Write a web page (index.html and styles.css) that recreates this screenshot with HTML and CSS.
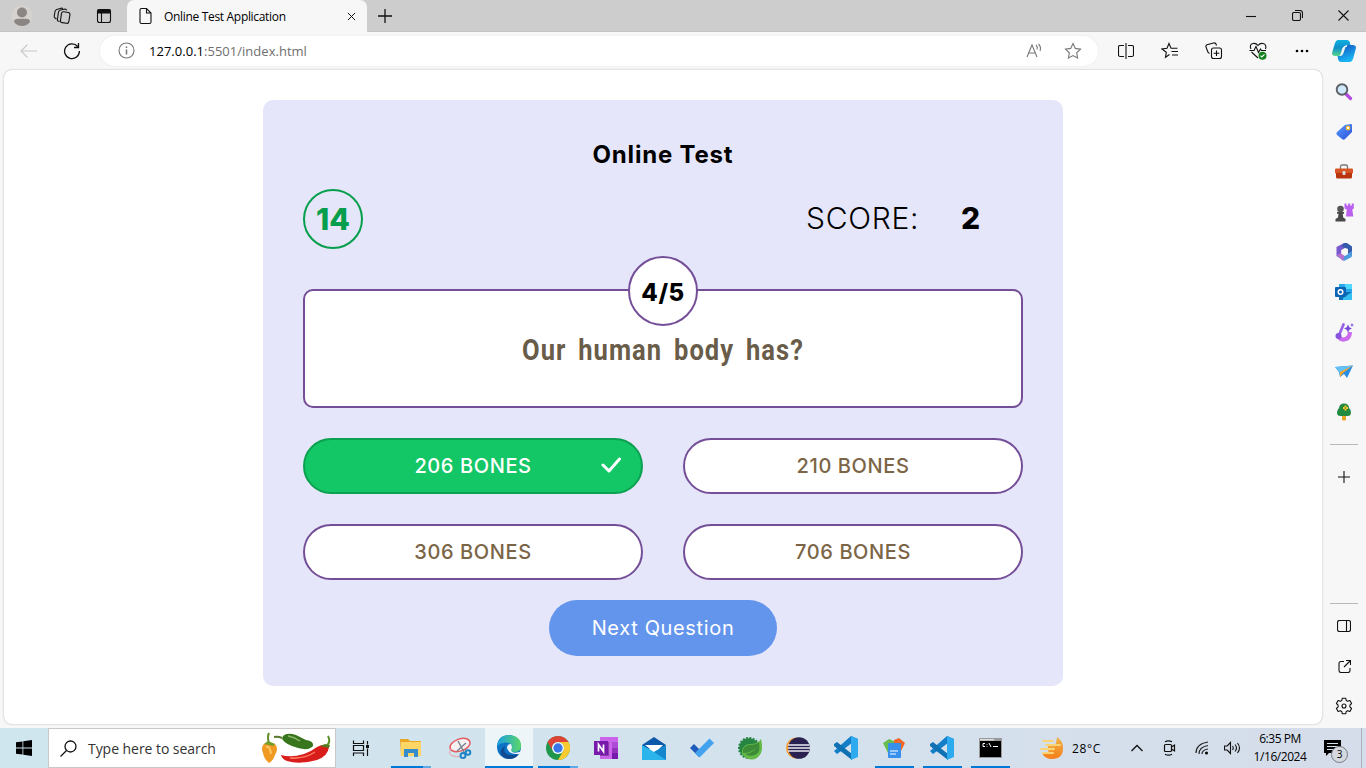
FILE: index.html
```html
<!DOCTYPE html>
<html lang="en">
<head>
<meta charset="utf-8">
<title>Online Test Application</title>
<link rel="stylesheet" href="styles.css">
</head>
<body>
<div class="screen">
  <header class="titlebar">
    <span class="slot w44"><svg width="22" height="22" viewBox="0 0 22 22"><circle cx="11" cy="11" r="10.5" fill="#d6d3cf"/><circle cx="11" cy="7.500" r="5" fill="#8b8683"/><path d="M3 17q0-3.300 4-3.300h8q4 0 4 3.300-3 4-8 4T3 17z" fill="#8b8683"/></svg></span>
    <span class="slot w36"><svg width="18" height="18" viewBox="0 0 18 18" class="line"><rect x="8" y="5" width="8.500" height="11" rx="2" transform="rotate(9 12 10)"/><path d="M6.500 14.500 5 14q-.8-.5-.6-1.500L5.500 5q.3-1.500 2-2l4.500-1q1.300 0 1.700 1.300M3.500 12 2 11q-1-.6-.8-1.700L2 4.500Q2.300 3 3.800 2.500L8 1.200q1.400-.3 1.800.5"/></svg></span>
    <span class="slot w48"><svg width="16" height="16" viewBox="0 0 16 16" class="line"><rect x="1.500" y="1.500" width="13" height="13" rx="2"/><path d="M2 2h12v3H2z" fill="#111"/><path d="M5.500 5v9"/></svg></span>
    <div class="tab">
      <svg width="14" height="18" viewBox="0 0 14 18" class="line"><path d="M2.500 1.500h5l4.500 4.500v9q0 1.500-1.500 1.500h-8Q1 16.500 1 15V3q0-1.500 1.500-1.500zM7.500 1.500V6H12"/></svg>
      <span class="tab-title">Online Test Application</span>
      <svg width="9" height="9" viewBox="0 0 10 10" class="line"><path d="m1 1 8 8M9 1 1 9"/></svg>
    </div>
    <span class="slot w34"><svg width="14" height="14" viewBox="0 0 14 14" class="line"><path d="M7 0v14M0 7h14" stroke-width="1.300"/></svg></span>
    <div class="window-buttons">
      <span class="slot"><svg width="10" height="10" viewBox="0 0 10 10" class="line"><path d="M0 5.500h10"/></svg></span>
      <span class="slot"><svg width="11" height="11" viewBox="0 0 11 11" class="line"><rect x=".5" y="2.500" width="8" height="8" rx="1.500"/><path d="M3 .5h5q2.500 0 2.500 2.500v5"/></svg></span>
      <span class="slot"><svg width="11" height="11" viewBox="0 0 11 11" class="line"><path d="m.5.5 10 10M10.500.5l-10 10"/></svg></span>
    </div>
  </header>

  <nav class="toolbar">
    <span class="slot"><svg width="17" height="14" viewBox="0 0 17 14" class="line faint"><path d="M17 7H1M7.500.5 1 7l6.500 6.500"/></svg></span>
    <span class="slot"><svg width="18" height="18" viewBox="0 0 18 18" class="line"><path d="M14.700 4.500A7.400 7.400 0 1 0 16.400 9M15.500 1v4.500H11" stroke-width="1.300"/></svg></span>
    <div class="address">
      <svg width="17" height="17" viewBox="0 0 17 17" class="line gray"><circle cx="8.500" cy="8.500" r="7.500"/><path d="M8.500 7.500v5M8.500 4.500V6" stroke-width="1.500"/></svg>
      <span class="url">127.0.0.1<span class="url-path">:5501/index.html</span></span>
      <svg class="read" width="17" height="16" viewBox="0 0 17 16"><path d="m1 14 5-12 5 12M3 10h6M10 2q2 2 1 4.500M12.500 1q3 3 1.500 7" fill="none" stroke="#777" stroke-width="1.100"/></svg>
      <svg width="18" height="18" viewBox="0 0 18 18" class="line gray"><path d="m9 1.500 2.300 4.900 5.200.7-3.800 3.700.9 5.300L9 13.600l-4.600 2.500.9-5.300L1.500 7.100l5.200-.7z"/></svg>
    </div>
    <div class="tools">
      <span class="slot"><svg width="16" height="16" viewBox="0 0 16 16" class="line"><path d="M6 2.500H2Q.5 2.500.5 4v8q0 1.500 1.500 1.500h4M10 2.500h4q1.500 0 1.500 1.500v8q0 1.500-1.500 1.500h-4M8 0v16"/></svg></span>
      <span class="slot"><svg width="18" height="18" viewBox="0 0 18 18" class="line"><path d="m8.500 12.500-4 2.800.8-5L1 7l5-.7 2-4.800 2 4.700h6.500M10.500 9.500H17M11 13h6"/></svg></span>
      <span class="slot"><svg width="18" height="18" viewBox="0 0 18 18" class="line"><rect x="6.500" y="6" width="10" height="10.500" rx="2"/><path d="M11.500 8.500v5.500M8.700 11.200h5.600M4.500 11.500Q3 11 2.500 9L1 5q-.4-1.600 1-2.200L8.500 1q2-.5 2.500 1l.5 1.500"/></svg></span>
      <span class="slot"><svg width="18" height="18" viewBox="0 0 18 18" class="line"><path d="M2 7Q0 2.500 4 1.500q3-.6 5 2 2-2.600 5-2 4 1 2.500 5.500M2.500 10 9 16M.5 8.500H5l2-4 2.500 6L11.500 7l1 1.500H17"/><circle cx="13.500" cy="13.700" r="4" fill="#11801d" stroke="none"/><path d="m11.500 13.700 1.300 1.300 2.700-2.700" stroke="#fff"/></svg></span>
      <span class="slot"><svg width="14" height="4" viewBox="0 0 14 4"><circle cx="2" cy="2" r="1.300"/><circle cx="7" cy="2" r="1.300"/><circle cx="12" cy="2" r="1.300"/></svg></span>
      <span class="slot copilot"><svg width="24" height="22" viewBox="0 0 24 22"><defs><linearGradient id="cp1" x2="0" y2="1"><stop stop-color="#0eb0e0"/><stop offset=".5" stop-color="#108fc9"/><stop offset="1" stop-color="#57d68b"/></linearGradient><linearGradient id="cp2" x2=".4" y2="1"><stop stop-color="#1551bd"/><stop offset="1" stop-color="#19b6f5"/></linearGradient></defs><path d="M6 0h9q2 0 2.700 2l.8 3h-3q-2 0-2.700 2l-2.500 7q-.8 2-3 2H3Q-.8 16 .3 12L3 3q1-3 3-3z" fill="url(#cp1)"/><path d="M18 22H9q-2 0-2.700-2l-.8-4h2.800q2 0 2.700-2l2.500-7q.7-2 3-2h4.200q4 0 3 4L21 19q-1 3-3 3z" fill="url(#cp2)"/><path d="M15 6q-2 0-2.700 2l-1.800 5q-.7 2-2.500 2.500 1-.8 1.500-2.500l1.500-5q.7-2 4-2z" fill="#f7f7f7" stroke="#f7f7f7"/></svg></span>
    </div>
  </nav>

  <div class="middle">
    <main class="page">
      <section class="card">
        <h1 class="title">Online Test</h1>
        <div class="status">
          <div class="timer"><span>14</span></div>
          <div class="score"><span class="score-label">SCORE:</span><b class="score-value">2</b></div>
        </div>
        <div class="question">
          <div class="counter"><span>4/5</span></div>
          <p class="question-text">Our human body has?</p>
        </div>
        <div class="options">
          <button class="option correct"><span>206 BONES</span><svg width="20" height="16" viewBox="0 0 20 16"><path d="m2 8 6 6L18.500 2" fill="none" stroke="#fff" stroke-width="3" stroke-linecap="round" stroke-linejoin="round"/></svg></button>
          <button class="option"><span>210 BONES</span></button>
          <button class="option"><span>306 BONES</span></button>
          <button class="option"><span>706 BONES</span></button>
        </div>
        <button class="next">Next Question</button>
      </section>
    </main>

    <aside class="sidebar">
      <span class="slot"><svg width="18" height="18" viewBox="0 0 18 18"><path d="m10.500 10.500 5 5" stroke="#b44be0" stroke-width="3.200" stroke-linecap="round"/><circle cx="7" cy="6.500" r="5.300" fill="#cfe9fa" stroke="#5c6065" stroke-width="1.900"/></svg></span>
      <span class="slot"><svg width="18" height="18" viewBox="0 0 18 18"><defs><linearGradient id="tag" x2="1" y2="1"><stop stop-color="#5c9cff"/><stop offset="1" stop-color="#2a50d8"/></linearGradient></defs><path d="M10 2l6-1q1 0 1 1v7l-7 7q-1.500 1.500-3 0L2 12Q.5 10.500 2 9z" fill="url(#tag)"/><circle cx="13" cy="5" r="1.800" fill="#fff" stroke="#f5bd28" stroke-width="1.200"/></svg></span>
      <span class="slot"><svg width="18" height="16" viewBox="0 0 18 16"><path d="M5.500 5V2.500Q5.500 1 7 1h4q1.500 0 1.500 1.500V5" fill="none" stroke="#777" stroke-width="1.300"/><rect y="4.500" width="18" height="5" rx="1" fill="#d75425"/><path d="M1 9h16v4q0 1.500-1.500 1.500h-13Q1 14.500 1 13z" fill="#b8350f"/><rect x="7.500" y="7" width="3" height="4" rx="1" fill="#ddd"/></svg></span>
      <span class="slot"><svg width="19" height="19" viewBox="0 0 19 19"><path d="M9.500.500h2v2h1.700v-2h2v2h1.600v-2h2v5l-1.500 1 1 7H11l.8-7-2.300-1z" fill="#bb60ef"/><circle cx="5.500" cy="6" r="3.300" fill="#555"/><path d="M2 9h7v1.700H7.700l.5 3.800 2.300 1.500v2.500H.5V16L3 14.500l.5-3.800H2z" fill="#494949"/></svg></span>
      <span class="slot"><svg width="18" height="18" viewBox="0 0 18 18"><path d="M9 0 1.500 4v9l5 3V7l6-3.500L9 0z" fill="#785bd0"/><path d="M9 0h3l5 3.500V13l-4-2.500V6L6.500 3.500z" fill="#355cab"/><path d="m17 8-.3 6L9 18 2 13l5-1.500 3 1.500 3-2z" fill="#4b9be0"/><path d="m1.500 12 5-2 3 3-1.500 5z" fill="#b76fce"/><path d="m9.500 5.500 3.200 1.800v3.500l-3.200 1.800-3.200-1.800V7.300z" fill="#f7f7f7"/></svg></span>
      <span class="slot"><svg width="18" height="18" viewBox="0 0 18 18"><path d="M4 1h13v8H4z" fill="#28a8ea"/><path d="M10 1h7v5h-7z" fill="#50d9ff"/><path d="M4 9h13v8H4z" fill="#0c6eb5"/><path d="m17 9-9 6v2h9z" fill="#36c0ef"/><rect y="4" width="11" height="10" rx="1" fill="#0a63b4"/><circle cx="5.500" cy="9" r="2.300" fill="none" stroke="#fff" stroke-width="1.500"/></svg></span>
      <span class="slot"><svg width="19" height="19" viewBox="0 0 19 19"><path d="M3 11q1 6 6 5.500 5.500-.5 6-7.500" fill="none" stroke="#cc6af0" stroke-width="4.200"/><path d="M8.500 1.500 4.500 11" stroke="#9a62e8" stroke-width="2.700" stroke-linecap="round"/><circle cx="3.500" cy="13" r="3" fill="#8854dd"/><path d="m13 1.500 1.300 2.700L17 5.500l-2.700 1.300L13 9.500l-1.300-2.700L9 5.500l2.700-1.300zM17 0l.6 1.400L19 2l-1.400.6L17 4l-.6-1.400L15 2l1.400-.6z" fill="#7848d7"/></svg></span>
      <span class="slot"><svg width="18" height="14" viewBox="0 0 18 14"><path d="M0 2 18 .5 12 13 9 9l-4 3-1-5z" fill="#288de4"/><path d="M0 2 18 .5 5 8z" fill="#63c0fb"/><path d="M5 12V7l13-6.500L8 8z" fill="#f6a623"/></svg></span>
      <span class="slot"><svg width="16" height="18" viewBox="0 0 16 18"><path d="M6 11h4v6q-2 1-4 0z" fill="#eaa52d"/><path d="M8 .5q5 0 5 4.500 2 1.500 2 4.500 0 3.500-3.500 3.500h-7Q1 13 1 9.500 1 7 3 5 3.500.5 8 .5z" fill="#238a42"/><path d="M9.500 2.500v5M7 5h5" stroke="#ffc426" stroke-width="2"/><circle cx="9.500" cy="5" r=".8" fill="#238a42"/></svg></span>
      <i class="rule"></i>
      <span class="slot add"><svg width="12" height="12" viewBox="0 0 12 12" class="line"><path d="M6 0v12M0 6h12"/></svg></span>
      <div class="side-bottom">
        <i class="rule"></i>
        <span class="slot"><svg width="14" height="12" viewBox="0 0 14 12" class="line"><rect x=".5" y=".5" width="13" height="11" rx="2"/><path d="M9.500.5v11"/></svg></span>
        <span class="slot"><svg width="13" height="13" viewBox="0 0 13 13" class="line"><path d="M6 1.500H3Q1 1.500 1 3.500v7q0 2 2 2h7q2 0 2-2V8M8 .5h4.500V5M12.500.5 6 7"/></svg></span>
        <span class="slot"><svg width="18" height="18" viewBox="0 0 18 18" class="line"><circle cx="9" cy="9" r="2"/><path d="M7.300 1.200h3.400l.5 2.300 1.500.8 2.200-.8 1.700 3-1.700 1.600v1.800l1.700 1.600-1.700 3-2.200-.8-1.500.8-.5 2.300H7.300l-.5-2.300-1.500-.8-2.200.8-1.700-3 1.700-1.600V8.100L1.400 6.500l1.700-3 2.200.8 1.500-.8z" stroke-linejoin="round"/></svg></span>
      </div>
    </aside>
  </div>

  <footer class="taskbar">
    <span class="slot"><svg width="16" height="16" viewBox="0 0 16 16"><path d="m0 2.300 6.500-.9v6.200H0zM7.300 1.300 16 0v7.600H7.300zM0 8.400h6.500v6.200L0 13.700zM7.300 8.400H16V16l-8.700-1.200z"/></svg></span>
    <div class="search">
      <svg width="17" height="17" viewBox="0 0 17 17" class="line"><circle cx="10.500" cy="6.500" r="5.500" stroke-width="1.300"/><path d="m6.500 10.500-6 6" stroke-width="1.300"/></svg>
      <span class="search-text">Type here to search</span>
      <svg class="peppers" width="70" height="34" viewBox="0 0 70 34"><path d="M7 12Q5 6 7 2" fill="none" stroke="#5e8f24" stroke-width="2"/><path d="M1 14q4-5 12-1 4 4 0 11-2 6-6 8Q2 28 1 22-1 18 1 14z" fill="#f19a22"/><path d="M4 16q4-2 5 7" fill="none" stroke="#ffc763" stroke-width="2"/><path d="m2 13 4-3 7 3-2 2-4-1z" fill="#719d2b"/><path d="M20 7q-4-2-8-1" fill="none" stroke="#577b2a" stroke-width="2"/><path d="M21 5q4-4 13-1l10 5q8 1 7 6-4 5-15 2Q24 14 20 8z" fill="#38761d"/><path d="M26 5q6 1 12 5" fill="none" stroke="#8fb46f" stroke-width="1.500"/><path d="M65 14q4-3 1-9" fill="none" stroke="#5d8e27" stroke-width="2"/><path d="M19 24q10 3 23-1 8-3 13-7 7-4 12 0-1 9-12 13-18 5-30 1-5-2-6-6z" fill="#d91d1b"/><path d="M28 27q15 1 25-6" fill="none" stroke="#ff7b63" stroke-width="1.500"/><path d="m58 15 5-2 5 1-1 3z" fill="#557d20"/></svg>
    </div>
    <span class="slot taskview"><svg width="17" height="17" viewBox="0 0 17 17" class="line"><path d="M1.500.5v3h10v-3M1.500 16v-3h10v3M1.500 5.500h10v5h-10zM15.500 1v3.500M15.500 8.500V16" stroke-width="1.200"/><path d="M14 5h3v3h-3z" fill="#111" stroke="none"/></svg></span>
    <div class="apps">
      <span class="slot running multi"><svg width="22" height="20" viewBox="0 0 22 20"><path d="M0 1h8l2 2h11v15H1z" fill="#e9a722"/><path d="M1 4h20v14H1z" fill="#ffd665"/><path d="M4 11h14v8h-4v-4H8v4H4z" fill="#368dce"/></svg></span>
      <span class="slot"><svg width="24" height="23" viewBox="0 0 24 23"><ellipse cx="12" cy="8" rx="10.500" ry="6" transform="rotate(-20 12 8)" fill="#f6f2f2" stroke="#e45b62" stroke-width="1.500"/><path d="M3 12q-4 5 2 7l7 1" fill="none" stroke="#e7a2a4"/><path d="m10 4 7 13M18 6l-9 8" stroke="#778590" stroke-width="1.500"/><circle cx="15" cy="18.500" r="2.500" fill="none" stroke="#2184c5" stroke-width="2"/><circle cx="20" cy="15.500" r="2.300" fill="none" stroke="#2184c5" stroke-width="2"/></svg></span>
      <span class="slot active"><svg width="24" height="24" viewBox="0 0 24 24"><defs><linearGradient id="ed" x2="1"><stop stop-color="#1b9de2"/><stop offset="1" stop-color="#5bd768"/></linearGradient></defs><circle cx="12" cy="12" r="12" fill="#0d73c5"/><path d="M0 11Q1 0 12 0q12 1 12 11 0 6-7 6-4 0-3-3 2-2 0-5Q7 5 0 11z" fill="url(#ed)"/><path d="M8 11q-4 12 14 8-5 7-14 4Q-1 17 8 11z" fill="#104b91"/><path d="M14 9q-4 0-4 4 1 5 8 6 3 0 5-2-8 2-9-2l1-2q0-2-1-4z" fill="#edf4f8"/><path d="M24 16q-2 2-6 2 3 2 4 1z" fill="#edf4f8"/></svg></span>
      <span class="slot running multi"><svg width="24" height="24" viewBox="0 0 24 24"><circle cx="12" cy="12" r="12" fill="#20974c"/><path d="M12 0a12 12 0 0 1 10.400 6H12a6 6 0 0 0-5.500 8.500L1.600 6A12 12 0 0 1 12 0z" fill="#df4336"/><path d="M22.400 6A12 12 0 0 1 12 24l5.200-9A6 6 0 0 0 12 6z" fill="#fbca30"/><circle cx="12" cy="12" r="6" fill="#fff"/><circle cx="12" cy="12" r="4.700" fill="#3977e8"/></svg></span>
      <span class="slot"><svg width="24" height="23" viewBox="0 0 24 23"><path d="M6 0h18v22H6z" fill="#ca64ea"/><path d="M18 5h6v6h-6z" fill="#ae4bd5"/><path d="M18 11h6v5h-6z" fill="#9332bf"/><path d="M18 16h6v6h-6z" fill="#7719aa"/><path d="M6 5h9v14H6z" fill="#44205c" opacity=".5"/><rect y="4" width="14" height="14" fill="#7719aa"/><path d="M4.500 14.500V7.500l5 7V7.500" fill="none" stroke="#fff" stroke-width="1.700"/></svg></span>
      <span class="slot"><svg width="24" height="23" viewBox="0 0 24 23"><path d="m0 8 12-8 12 8v4H0z" fill="#0b59a8"/><path d="M3 8h18l-8 8z" fill="#fff"/><path d="m0 8 12 7 12-7v15H0z" fill="#2bb4eb"/><path d="m12 15 12-7v15z" fill="#1585cc"/></svg></span>
      <span class="slot"><svg width="24" height="20" viewBox="0 0 24 20"><path d="m0 10 4-4 9 9-4 4z" fill="#1f5bbd"/><path d="M5 15 19.500.5 24 5 9.500 19.500z" fill="#42a2ed"/></svg></span>
      <span class="slot"><svg width="24" height="24" viewBox="0 0 24 24"><circle cx="11" cy="12" r="9.800" fill="#278542" stroke="#278542" stroke-width="2.500" stroke-dasharray="2 1.300"/><path d="M23 3q3 12-2 17-5 6-13 2l-4-4Q3 9 12 8q8 0 11-5z" fill="#65b947"/><path d="M5 17q-1-7 6-8 7 0 10-3 2 11-4 13-6 2-10-1 8-1 11-6-5 5-13 5z" fill="#3d8d38"/></svg></span>
      <span class="slot"><svg width="24" height="22" viewBox="0 0 24 22"><circle cx="10.500" cy="11" r="10.500" fill="#f29b30"/><circle cx="13" cy="11" r="10.800" fill="#2b2150"/><path d="M2 8h21M2 11h22M2 14h21" stroke="#eceaf4" stroke-width="1.600"/></svg></span>
      <span class="slot"><svg width="24" height="24" viewBox="0 0 24 24"><path d="m0 15 17-15 7 3-6 4L3 18z" fill="#147fc9"/><path d="m0 8 3-2 15 12v6L0 10z" fill="#1070b4"/><path d="m17 0 7 3v18l-7 3z" fill="#2daaf0"/></svg></span>
      <span class="slot running"><svg width="22" height="22" viewBox="0 0 22 22"><path d="m0 6 6-4 7 3-2 10-6 1z" fill="#69bd4c"/><path d="m11 3 5-2 6 5-4 8-7-1z" fill="#f26627"/><rect x="5" y="6" width="13" height="15" rx="1" fill="#3690ec"/><path d="M7 14h8M7 17h6" stroke="#fff" stroke-width="1.200"/></svg></span>
      <span class="slot running"><svg width="24" height="24" viewBox="0 0 24 24"><path d="m0 15 17-15 7 3-6 4L3 18z" fill="#147fc9"/><path d="m0 8 3-2 15 12v6L0 10z" fill="#1070b4"/><path d="m17 0 7 3v18l-7 3z" fill="#2daaf0"/></svg></span>
      <span class="slot running"><svg width="23" height="20" viewBox="0 0 23 20"><rect width="23" height="20" fill="#999"/><path d="M1 3h21v16H1z"/><path d="M1 1h14v1.500H1z" fill="#ddd"/><path d="M6 5.500H4v3h2M8 6v.7M8 8v.7M10 5l2 4M14 8.500h5" fill="none" stroke="#fff"/></svg></span>
    </div>
    <div class="tray">
      <svg class="weather" width="24" height="24" viewBox="0 0 24 24"><defs><linearGradient id="mn" x2="0" y2="1"><stop stop-color="#efb344"/><stop offset="1" stop-color="#f57e1b"/></linearGradient></defs><path d="M17 1q6 4 6 11 0 11-11 11Q5 23 2 17q14-1 15-16z" fill="url(#mn)"/><path d="M8 9h6v6H8z" fill="#f1a63c"/><path d="M3 5h10M6 9h14M1 13h13M3 17h10" stroke="#f9d477" stroke-width="2" stroke-linecap="round"/></svg>
      <span class="temp">28°C</span>
      <svg class="chevron" width="12" height="8" viewBox="0 0 12 8"><path d="m.5 7 5.500-5.500L11.500 7" fill="none" stroke="#111" stroke-width="1.300"/></svg>
      <svg class="meet" width="13" height="16" viewBox="0 0 13 16"><path d="M2.500 4.500h5q1 0 1 1v5q0 1-1 1h-5q-1 0-1-1v-5q0-1 1-1zM8.500 7 11.500 5v6L8.500 9M2 1.800q3.500-2 7 0M2 14.200q3.500 2 7 0" fill="none" stroke="#111" stroke-width="1.200"/></svg>
      <svg class="wifi" width="14" height="14" viewBox="0 0 14 14"><path d="M1 12Q1 3 13 1M4 13Q4 6 13 4.500M7 13q0-4 6-5" fill="none" stroke="#222" stroke-width="1.200"/><circle cx="11.500" cy="12" r="1.500"/></svg>
      <svg class="volume" width="17" height="14" viewBox="0 0 17 14"><path d="M.5 5h2.700L6.500 1.500v11L3.200 9H.5zM8.500 5q1.500 2 0 4M11 3.500q3 3.500 0 7M13.500 2q4 5 0 10" fill="none" stroke="#111" stroke-width="1.100"/></svg>
      <div class="clock"><span class="time">6:35 PM</span><span class="date">1/16/2024</span></div>
      <div class="notice"><svg width="17" height="16" viewBox="0 0 17 16"><path d="M0 0h17v13H5l-3 3v-3H0z"/><path d="M3 3.500h11M3 6.500h11M3 9.500h8" stroke="#d7e0ed"/></svg><span class="badge">3</span></div>
    </div>
  </footer>
</div>
</body>
</html>
```
FILE: styles.css
```css
* { box-sizing: border-box; }
body { margin: 0; font-family: "Open Sans", sans-serif; color: #000; }
svg { display: block; flex: none; }
.line { fill: none; stroke: #111; stroke-width: 1.1; }
.line.gray { stroke: #777; }
.line.faint { stroke: #c8c8c8; }
.screen { width: 1366px; height: 768px; display: flex; flex-direction: column; overflow: hidden; background: #f7f7f7; }
.slot { display: flex; align-items: center; justify-content: center; flex: none; }
.w44 { width: 44px; }
.w36 { width: 36px; }
.w48 { width: 47px; }
.w34 { width: 35px; }

.titlebar { height: 32px; flex: none; display: flex; background: #cdcdcd; border-bottom: 1px solid #c3c3c3; }
.tab { width: 240px; height: 32px; display: flex; align-items: center; padding: 0 11px 0 12px; background: #f7f7f7; border-radius: 7px 7px 0 0; }
.tab-title { margin-left: 11px; margin-right: auto; font-size: 12px; letter-spacing: -.32px; white-space: nowrap; }
.window-buttons { display: flex; margin-left: auto; }
.window-buttons .slot { width: 46px; }

.toolbar { height: 37px; flex: none; display: flex; align-items: center; padding-left: 6px; }
.toolbar .slot { width: 44px; }
.address { width: 998px; height: 30px; margin-left: 6px; display: flex; align-items: center; padding: 0 16px 0 18px; border-radius: 15px; background: #fff; box-shadow: 0 0 3px rgba(0, 0, 0, .06); }
.url { margin: 0 auto 0 14px; font-size: 13px; letter-spacing: .02px; white-space: nowrap; }
.url-path { color: #6f6f6f; }
.read { margin-right: 21px; }
.tools { display: flex; margin-left: 6px; }
.tools .copilot { width: 40px; }

.middle { height: 659px; flex: none; display: flex; padding: 1px 0 4px 4px; }
.page { width: 1318px; height: 654px; padding-top: 30px; background: #fff; border-radius: 8px; box-shadow: 0 0 2px rgba(0, 0, 0, .3); }
.card { width: 800px; height: 586px; margin-left: 259px; padding: 40px 40px 30px; display: flex; flex-direction: column; border-radius: 10px; background: #e6e6fa; font-family: Inter, sans-serif; }
.card > * { flex: none; }
.title { margin: 0; height: 29px; line-height: 29px; text-align: center; font-size: 24px; font-weight: 650; letter-spacing: .8px; }
.status { height: 60px; margin-top: 20px; display: flex; align-items: center; justify-content: space-between; }
.timer { width: 60px; height: 60px; display: flex; align-items: center; justify-content: center; border: 2px solid #059e4c; border-radius: 50%; color: #059e4c; font-size: 30px; font-weight: 800; }
.timer span { margin-top: -1px; }
.score { width: 217px; display: flex; margin-top: -2px; font-size: 30px; }
.score-label { width: 155px; font-weight: 300; letter-spacing: .7px; }
.score-value { font-weight: 800; }
.question { position: relative; height: 119px; margin-top: 40px; border: 2px solid #744f98; border-radius: 10px; background: #fff; }
.counter { position: absolute; left: 323px; top: -35px; width: 70px; height: 70px; padding-top: 3px; display: flex; align-items: center; justify-content: center; border: 2px solid #744f98; border-radius: 50%; background: #fff; font-size: 24px; font-weight: 800; letter-spacing: .5px; }
.question-text { margin: 42px 0 0; line-height: 34px; text-align: center; color: #695c49; font-family: Roboto, sans-serif; font-size: 29px; font-weight: 700; letter-spacing: 1.2px; word-spacing: 5px; transform: scaleX(.88); }
.options { display: grid; grid-template-columns: 340px 340px; gap: 30px 40px; margin-top: 30px; }
.option { position: relative; height: 56px; padding: 0; display: flex; align-items: center; justify-content: center; border: 2px solid #744f98; border-radius: 28px; background: #fff; color: #7b6546; font-family: Inter, sans-serif; font-size: 20px; font-weight: 450; letter-spacing: .6px; }
.option.correct { border-color: #0ca150; background: #13c666; color: #fff; }
.option svg { position: absolute; right: 20px; top: 17px; }
.next { width: 228px; height: 56px; margin: 20px auto 0; padding: 0; border: 0; border-radius: 28px; background: #6495ed; color: #fff; font-family: Inter, sans-serif; font-size: 20px; letter-spacing: .65px; }

.sidebar { width: 44px; height: 654px; padding-top: 2px; display: flex; flex-direction: column; align-items: center; }
.sidebar .slot { width: 44px; height: 40px; }
.rule { width: 28px; height: 1px; flex: none; margin-top: 12px; background: #b9b9b9; }
.sidebar .add { margin-top: 12px; }
.side-bottom { margin-top: auto; margin-bottom: -2px; }
.side-bottom .rule { display: block; margin: 0 auto 2px; }

.taskbar { height: 40px; flex: none; display: flex; background: linear-gradient(90deg, #cfe6ef, #d4e2ed 60%, #d5dcea); }
.taskbar .slot { width: 48px; height: 40px; }
.search { width: 288px; height: 40px; padding: 0 3px 0 11px; display: flex; align-items: center; border: 1px solid #c8c8c8; background: #fff; }
.search-text { margin-left: 11px; margin-right: auto; font-size: 14px; color: #333; letter-spacing: -.05px; white-space: nowrap; }
.apps { display: flex; margin-left: 3px; }
.apps .slot:nth-child(2) { width: 50px; }
.apps .slot:nth-child(4) { width: 49px; }
.taskbar .taskview { width: 48px; }
.taskbar .active { background: #edf5f9; border-bottom: 2px solid #0078d7; }
.taskbar .running { background: linear-gradient(#0078d7, #0078d7) 50% 100% / 39px 2px no-repeat; }
.taskbar .multi { background: linear-gradient(90deg, #0078d7 32px, #60a9e5 32px) 50% 100% / 40px 2px no-repeat; }
.tray { display: flex; align-items: center; width: 322px; margin-left: auto; margin-right: 4px; border-right: 1px solid #aab3bf; }
.temp { width: 36px; margin-left: 8px; font-size: 12px; letter-spacing: .6px; }
.chevron { margin-left: 23px; }
.meet { margin-left: 20px; }
.wifi { margin-left: 19px; }
.volume { margin-left: 15px; }
.clock { width: 70px; margin-left: 4px; display: flex; flex-direction: column; align-items: center; font-size: 12px; line-height: 18px; letter-spacing: -.45px; }
.notice { position: relative; margin-left: 9px; }
.badge { position: absolute; left: 7px; top: 6px; width: 17px; height: 17px; border: 1px solid #747b84; border-radius: 50%; background: #d5d9df; text-align: center; font-size: 10px; line-height: 15px; }
```
